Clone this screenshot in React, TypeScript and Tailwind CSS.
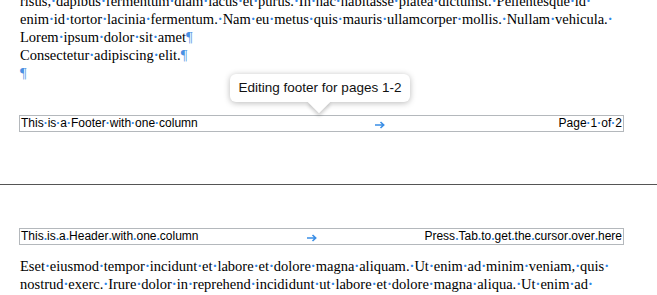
const serif = { fontFamily: '"Liberation Serif", "Times New Roman", serif' };
const sans = { fontFamily: '"Liberation Sans", Arial, sans-serif' };

function Dotted({ text, dot = '·' }: { text: string; dot?: string }) {
  const parts = text.split(' ');
  return (
    <>
      {parts.map((p, i) => (
        <span key={i}>
          {p}
          {i < parts.length - 1 && <span className="text-[#2f86e8] font-bold">{dot}</span>}
        </span>
      ))}
    </>
  );
}

const Pilcrow = () => <span className="text-[#4a90e2]">¶</span>;

function Arrow() {
  return (
    <svg width="10" height="8" viewBox="0 0 10 8" className="mt-[3px]">
      <path d="M0 4h8.5M5.5 1l3.2 3-3.2 3" fill="none" stroke="#3a8ee6" strokeWidth="1.6" />
    </svg>
  );
}

function Bar({ left, right, dot, arrowAt }: { left: string; right: string; dot: string; arrowAt: string }) {
  return (
    <div
      className="ml-[19px] w-[605px] h-[17px] border border-[#b4b8bc] flex items-center text-[12px] leading-[15px] text-black px-px whitespace-nowrap"
      style={sans}
    >
      <div className={arrowAt}>
        <Dotted text={left} dot={dot} />
      </div>
      <Arrow />
      <div className="ml-auto">
        <Dotted text={right} dot={dot} />
      </div>
    </div>
  );
}

export default function App() {
  return (
    <div className="w-[657px] h-[295px] overflow-hidden bg-white text-black">
      {/* page 1 bottom */}
      <div className="h-[184px] relative flex flex-col">
        <div className="-mt-[8px] px-[20px] text-[14.5px] leading-[18px] whitespace-nowrap" style={serif}>
          <div>
            <Dotted text="risus, dapibus fermentum diam lacus et purus. In hac habitasse platea dictumst. Pellentesque id " />
          </div>
          <div>
            <Dotted text="enim id tortor lacinia fermentum. Nam eu metus quis mauris ullamcorper mollis. Nullam vehicula. " />
          </div>
          <div>
            <Dotted text="Lorem ipsum dolor sit amet" />
            <Pilcrow />
          </div>
          <div>
            <Dotted text="Consectetur adipiscing elit." />
            <Pilcrow />
          </div>
          <div>
            <Pilcrow />
          </div>
        </div>
        <div className="mt-[33px]">
          <Bar left="This is a Footer with one column" right="Page 1 of 2" dot="·" arrowAt="w-[354px]" />
        </div>

        {/* tooltip */}
        <div
          className="absolute left-[230px] top-[74px] w-[180px] h-[28px] rounded-[6px] bg-white flex items-center justify-center text-[13.5px] text-[#111] shadow-[0_1px_6px_rgba(0,0,0,0.28)]"
          style={sans}
        >
          <span className="relative z-10">Editing footer for pages 1-2</span>
          <div className="absolute left-[81px] top-[20px] w-[16px] h-[16px] bg-white rotate-45 shadow-[2px_2px_4px_rgba(0,0,0,0.2)]" />
          <div className="absolute left-[70px] top-[14px] w-[40px] h-[14px] bg-white rounded-b-[6px]" />
        </div>
      </div>

      <div className="h-px bg-[#555]" />

      {/* page 2 top */}
      <div className="pt-[43px]">
        <Bar left="This is a Header with one column" right="Press Tab to get the cursor over here" dot="." arrowAt="w-[286px]" />
        <div className="mt-[12px] px-[20px] text-[14.5px] leading-[18px] whitespace-nowrap" style={serif}>
          <div>
            <Dotted text="Eset eiusmod tempor incidunt et labore et dolore magna aliquam. Ut enim ad minim veniam, quis " />
          </div>
          <div>
            <Dotted text="nostrud exerc. Irure dolor in reprehend incididunt ut labore et dolore magna aliqua. Ut enim ad " />
          </div>
        </div>
      </div>
    </div>
  );
}
